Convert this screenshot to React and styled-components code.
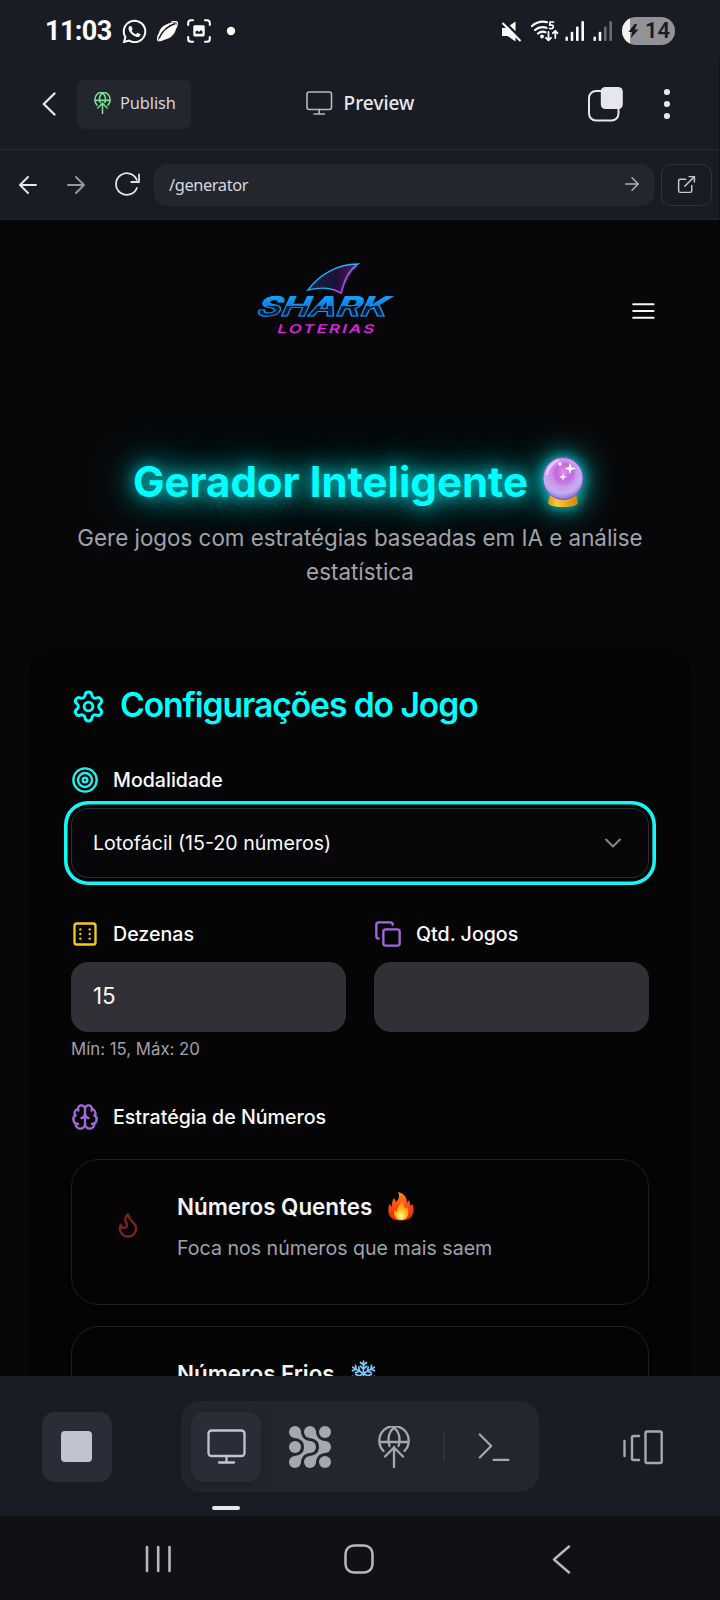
import React from "react";
import styled, { createGlobalStyle } from "styled-components";
import { Settings, Target, Dice6, Copy, Brain, Flame, ChevronDown, ExternalLink } from "lucide-react";
import { FaWhatsapp } from "react-icons/fa";

const Global = createGlobalStyle`
  *, *::before, *::after { box-sizing: border-box; }
  html, body { margin: 0; background: #070709; }
  body { font-family: Inter, "Liberation Sans", sans-serif; color: #f4f4f5; overflow: hidden; }
  h1, h2, h3, p { margin: 0; }
  button { padding: 0; border: 0; background: none; color: inherit; font: inherit; }
  svg { display: block; flex: none; }
`;

const Screen = styled.div`
  width: 720px;
  height: 1600px;
  display: flex;
  flex-direction: column;
  overflow: hidden;
  background: #1a1c24;
`;

/* status bar */
const StatusBar = styled.div`
  height: 60px;
  flex: none;
  display: flex;
  align-items: center;
  padding: 2px 45px 0 45px;
  color: #fff;
`;
const Clock = styled.span`
  width: 76px;
  font: 700 27px/30px Roboto, sans-serif;
  letter-spacing: -0.6px;
`;
const StatusIcons = styled.div`
  display: flex;
  align-items: center;
  gap: ${(p) => p.$gap}px;
  margin-left: ${(p) => p.$push || 0};
`;
const Battery = styled.div`
  width: 53px;
  height: 28px;
  margin-left: 1px;
  border-radius: 14px;
  display: flex;
  align-items: center;
  gap: 6px;
  padding-left: 6px;
  background: linear-gradient(90deg, #f1f1f2 8px, #929398 8px);
  color: #1a1c24;
  font: 600 22px/28px Roboto, sans-serif;
`;

/* application header */
const Header = styled.header`
  height: 90px;
  flex: none;
  display: grid;
  grid-template-columns: 1fr auto 1fr;
  align-items: center;
  padding: 0 49px 1px 42px;
  border-bottom: 1px solid #262831;
  border-right: 1px solid #111217;
  color: #e6e7ec;
  font-family: "Noto Sans", sans-serif;
`;
const HeaderSide = styled.div`
  display: flex;
  align-items: center;
  justify-content: ${(p) => (p.$end ? "flex-end" : "flex-start")};
  gap: ${(p) => (p.$end ? 40 : 21)}px;
`;
const Publish = styled.button`
  width: 114px;
  height: 49px;
  border-radius: 7px;
  display: flex;
  align-items: center;
  gap: 9px;
  padding: 0 0 3px 17px;
  background: #24262f;
  color: #d3d5dc;
  font-size: 16.4px;
  letter-spacing: -0.1px;
`;
const HeaderTitle = styled.div`
  display: flex;
  align-items: center;
  gap: 11px;
  padding: 0 0 2px 8px;
  font-size: 19px;
  font-weight: 500;
  letter-spacing: 0;
`;

/* address row */
const AddressRow = styled.div`
  height: 70px;
  flex: none;
  display: flex;
  align-items: center;
  padding: 0 7px 0 19px;
  border-bottom: 1px solid #24262e;
  border-right: 1px solid #111217;
  color: #e1e3e8;
`;
const NavIcons = styled.div`
  width: 135px;
  display: flex;
  align-items: center;
  gap: 30px;
`;
const Address = styled.div`
  width: 500px;
  height: 42px;
  border-radius: 13px;
  display: flex;
  align-items: center;
  justify-content: space-between;
  padding: 0 15px 1px 15px;
  background: #24262f;
  color: #d6d8de;
  font: 16.4px "Noto Sans", sans-serif;
  letter-spacing: -0.4px;
`;
const OpenButton = styled.button`
  width: 51px;
  height: 42px;
  margin-left: 7px;
  border: 1px solid #30323d;
  border-radius: 10px;
  display: grid;
  place-items: center;
  color: #c5c8d0;
`;

/* previewed page */
const Page = styled.main`
  height: 1156px;
  flex: none;
  overflow: hidden;
  padding: 0 28px;
  background: #070709;
`;
const SiteHeader = styled.div`
  height: 180px;
  display: flex;
  justify-content: space-between;
  align-items: flex-start;
  padding: 38px 37px 0 222px;
`;
const MenuButton = styled.button`
  margin-top: 45px;
`;
const Hero = styled.section`
  height: 248px;
  padding-top: 51px;
  text-align: center;
`;
const HeroTitle = styled.h1`
  display: flex;
  justify-content: center;
  align-items: center;
  gap: 14px;
  height: 62px;
  padding-right: 3px;
  color: #00ffff;
  font-size: 42px;
  font-weight: 700;
  line-height: 62px;
  letter-spacing: 0;
  white-space: nowrap;
  text-shadow: 0 0 14px rgba(0, 255, 255, 0.55), 0 0 28px rgba(0, 255, 255, 0.85), 0 0 56px rgba(0, 255, 255, 0.6);
`;
const BallGlow = styled.span`
  filter: drop-shadow(0 0 7px rgba(0, 255, 255, 0.8)) drop-shadow(0 0 16px rgba(0, 255, 255, 0.6));
`;
const Subtitle = styled.p`
  margin-top: 8px;
  color: #a1a1aa;
  font-size: 22.4px;
  line-height: 34px;
`;
const Panel = styled.section`
  height: 900px;
  border-radius: 28px;
  padding: 37px 43px 0;
  background: #050505;
`;
const PanelTitle = styled.h2`
  height: 42px;
  display: flex;
  align-items: center;
  gap: 14px;
  color: #00ffff;
  font-size: 33.6px;
  font-weight: 600;
  letter-spacing: -1.05px;
  line-height: 40px;
`;
const PanelTitleText = styled.span`
  padding-bottom: 2px;
`;
const Label = styled.div`
  height: 28px;
  display: flex;
  align-items: center;
  gap: 14px;
  color: #fafafa;
  font-size: 19.6px;
  font-weight: 500;
  line-height: 28px;
`;
const ModeField = styled.div`
  margin-top: 39px;
`;
const Select = styled.div`
  height: 70px;
  margin-top: 14px;
  border: 1px solid #2d2d31;
  border-radius: 17px;
  box-shadow: 0 0 0 3.4px #050505, 0 0 0 7px #15f6f6;
  display: flex;
  align-items: center;
  justify-content: space-between;
  padding: 0 21px;
  background: #070709;
  color: #fafafa;
  font-size: 19.6px;
`;
const FieldRow = styled.div`
  display: grid;
  grid-template-columns: 1fr 1fr;
  gap: 28px;
  margin-top: 42px;
`;
const Input = styled.div`
  height: 70px;
  margin-top: 14px;
  border-radius: 17px;
  padding: 0 22px;
  background: #313036;
  color: #fafafa;
  font-size: 22.4px;
  line-height: 68px;
`;
const Hint = styled.p`
  margin: 5px 0 1px;
  color: #a1a1aa;
  font-size: 16.8px;
  line-height: 24px;
`;
const StrategyLabel = styled(Label)`
  margin-top: 41px;
`;
const Strategy = styled.article`
  height: 146px;
  margin-top: ${(p) => (p.$first ? 28 : 21)}px;
  border: 1px solid #202022;
  border-radius: 28px;
  display: flex;
  padding: 27px 41px 28px 42px;
  background: #040404;
  box-shadow: 0 10px 14px rgba(3, 3, 7, 0.6);
`;
const StrategyIcon = styled.div`
  width: 63px;
  padding-top: 24px;
`;
const StrategyTitle = styled.h3`
  display: flex;
  align-items: center;
  gap: 16px;
  height: 38px;
  font-size: 22.4px;
  font-weight: 600;
`;
const StrategyText = styled.p`
  margin-top: 9px;
  color: #a1a1aa;
  font-size: 19.6px;
  line-height: 28px;
`;

/* bottom toolbar */
const Toolbar = styled.footer`
  height: 140px;
  flex: none;
  display: flex;
  align-items: flex-start;
  padding: 25px 57px 0 42px;
  color: #a4a8b2;
`;
const Tile = styled.button`
  width: 70px;
  height: 70px;
  flex: none;
  border-radius: 13px;
  display: grid;
  place-items: center;
  background: #2a2c38;
  color: #c1c4ce;
  box-shadow: ${(p) => (p.$raised ? "0 4px 14px rgba(20,21,29,.4)" : "none")};
`;
const StopTile = styled(Tile)`
  margin: 11px 69px 0 0;
`;
const StopSquare = styled.div`
  width: 31px;
  height: 31px;
  margin: 0 1px 1px 0;
  border-radius: 4px;
  background: #c1c4ce;
`;
const ToolGroup = styled.div`
  width: 358px;
  height: 91px;
  flex: none;
  border-radius: 20px;
  display: flex;
  align-items: center;
  padding-left: 10px;
  background: #24262f;
`;
const TabSlot = styled.div`
  display: flex;
  flex-direction: column;
  align-items: center;
  gap: 24px;
  height: 70px;
`;
const Indicator = styled.div`
  width: 28px;
  height: 4px;
  flex: none;
  border-radius: 2px;
  background: #e6e7ec;
`;
const Tool = styled.button`
  flex: none;
  margin-left: ${(p) => p.$gap}px;
`;
const Divider = styled.div`
  width: 2px;
  height: 28px;
  flex: none;
  margin-left: 33px;
  background: #30323d;
`;
const Devices = styled.button`
  margin: 29px 0 0 auto;
`;

/* system navigation */
const SystemNav = styled.nav`
  height: 84px;
  flex: none;
  display: flex;
  justify-content: space-between;
  align-items: center;
  padding: 4px 149px 2px 145px;
  background: #101115;
  color: #b9b9bb;
`;
const HomeButton = styled.button`
  margin-right: 6px;
`;

const Line = ({ w, h, sw = 2, color = "currentColor", children }) => (
  <svg width={w} height={h} viewBox={`0 0 ${w} ${h}`} fill="none" stroke={color} strokeWidth={sw} strokeLinecap="round" strokeLinejoin="round">
    {children}
  </svg>
);

const GlobeUp = ({ width, height, color = "currentColor", sw = 2.3 }) => (
  <svg width={width} height={height} viewBox="0 0 32 42" fill="none" stroke={color} strokeWidth={sw} strokeLinecap="round" strokeLinejoin="round">
    <path d="M5.5 25A14.7 14.7 0 1 1 26.5 25M1.5 16H30.5M11.5 20C9 12 11.5 5 16 1.5C20.5 5 23 12 20.5 20M16 41V21M7 30.5L16 21.5L25 30.5" />
  </svg>
);

const Signal = ({ weak }) => (
  <svg width="20" height="20" viewBox="0 0 20 20" fill="#fff">
    <rect x="0.5" y="15.5" width="2.4" height="4.5" rx="1" />
    <rect x="5.7" y="10.8" width="2.6" height="9.2" rx="1" />
    <rect x="11" y="5.5" width="2.6" height="14.5" rx="1" opacity={weak ? 0.35 : 1} />
    <rect x="16.4" y="0" width="2.6" height="20" rx="1" opacity={weak ? 0.35 : 1} />
  </svg>
);

const Arrow = ({ left, size = 18, color, sw = 1.9 }) => (
  <svg width={size} height={size} viewBox="0 0 18 18" fill="none" stroke={color} strokeWidth={sw} strokeLinecap="round" strokeLinejoin="round">
    <path d={left ? "M17 9H1M9 1L1 9L9 17" : "M1 9H17M9 1L17 9L9 17"} />
  </svg>
);

const Flow = () => (
  <svg width="42" height="42" viewBox="0 0 42 42" fill="currentColor">
    {[6, 21, 36].map((x) => [6, 21, 36].map((y) => <circle key={`${x}-${y}`} cx={x} cy={y} r="6" />))}
    <path d="M11.8 4.5C12 10.5 15.5 14.8 21 15V27C15.5 27.2 12 31.5 11.8 37.5L5 30C11 29.6 15 27 15 21S11 12.4 5 12Z" />
    <path d="M26.8 4.5C27 10.5 30.5 14.8 36 15V27C30.5 27.2 27 31.5 26.8 37.5L20 30C26 29.6 30 27 30 21S26 12.4 20 12Z" />
  </svg>
);

const Logo = () => (
  <svg width="144" height="80" viewBox="0 0 144 80" overflow="visible">
    <defs>
      <linearGradient id="edge" x1="0" y1="0" x2="1" y2="0.3">
        <stop offset="0" stopColor="#159de9" /><stop offset="0.6" stopColor="#22b8ee" /><stop offset="1" stopColor="#22b8ee" />
      </linearGradient>
      <linearGradient id="finFill" x1="0" y1="0" x2="1" y2="0">
        <stop offset="0" stopColor="#06253c" /><stop offset="0.55" stopColor="#170d30" /><stop offset="1" stopColor="#641064" />
      </linearGradient>
      <linearGradient id="word" gradientUnits="userSpaceOnUse" x1="0" y1="-20" x2="0" y2="0">
        <stop offset="0" stopColor="#16a9ff" /><stop offset="0.48" stopColor="#0878ee" /><stop offset="0.5" stopColor="#05152e" /><stop offset="1" stopColor="#071f42" />
      </linearGradient>
      <pattern id="mesh" width="3" height="3" patternUnits="userSpaceOnUse" patternTransform="rotate(25)">
        <circle cx="1" cy="1" r="0.55" fill="#52358d" />
      </pattern>
    </defs>
    <path d="M58 32C69 17 87 6 108 6C98 12 94 24 91 35C81 29 70 29 58 32Z" fill="url(#finFill)" />
    <path d="M58 32C69 17 87 6 108 6C98 12 94 24 91 35C81 29 70 29 58 32Z" fill="url(#mesh)" stroke="url(#edge)" strokeWidth="1.4" />
    <path d="M107 7.5C98 14 94 24 91 35L83 31.5" fill="none" stroke="#c42ad8" strokeWidth="1.5" />
    <text x="0" y="0" transform="translate(5 58) skewX(-24)" textLength="130" lengthAdjust="spacingAndGlyphs" fontFamily="Inter, sans-serif" fontWeight="700" fontSize="27" fill="url(#word)" stroke="#149bf2" strokeWidth="0.9">SHARK</text>
    <text x="0" y="0" transform="translate(26.5 75) skewX(-16)" textLength="99" lengthAdjust="spacingAndGlyphs" fontFamily="Inter, sans-serif" fontWeight="600" fontSize="12" letterSpacing="1.5" fill="#dc24dc">LOTERIAS</text>
  </svg>
);

const CrystalBall = () => (
  <svg width="42" height="52" viewBox="0 0 42 52">
    <defs>
      <radialGradient id="ball" cx="0.48" cy="0.36" r="0.66">
        <stop offset="0" stopColor="#e08bee" /><stop offset="0.35" stopColor="#cf86ea" /><stop offset="0.75" stopColor="#c3b0ef" /><stop offset="1" stopColor="#8264cf" />
      </radialGradient>
      <linearGradient id="brass" x1="0" y1="0" x2="1" y2="0">
        <stop offset="0" stopColor="#d99a10" /><stop offset="0.3" stopColor="#f8cb3c" /><stop offset="1" stopColor="#cf8508" />
      </linearGradient>
      <radialGradient id="core" cx="0.5" cy="0.4" r="0.5">
        <stop offset="0" stopColor="#ea8df2" /><stop offset="0.7" stopColor="#bb62da" stopOpacity="0.8" /><stop offset="1" stopColor="#b061d8" stopOpacity="0.3" />
      </radialGradient>
    </defs>
    <path d="M8 39L6 46Q6 51 21 51Q36 51 36 46L34 39Z" fill="url(#brass)" />
    <ellipse cx="21" cy="22.5" rx="20" ry="21" fill="url(#ball)" stroke="#8150c9" strokeWidth="1" />
    <circle cx="22" cy="18" r="11.5" fill="url(#core)" />
    <path d="M5 18Q7 8 16 4" fill="none" stroke="#f4d4fb" strokeWidth="2.5" strokeLinecap="round" opacity="0.8" />
    <path d="M28 7L29.4 11L34 12.5L29.4 14L28 18L26.6 14L22.5 12.5L26.6 11ZM18 5L18.9 7.3L21 8L18.9 8.8L18 11L17.1 8.8L15 8L17.1 7.3ZM21 17L22 20L25 21L22 22L21 25L20 22L17 21L20 20Z" fill="#fff" />
  </svg>
);

const Fire = () => (
  <svg width="26" height="29" viewBox="0 0 26 29">
    <defs>
      <linearGradient id="flame" x1="0" y1="0" x2="0" y2="1">
        <stop offset="0" stopColor="#ff8a1c" /><stop offset="0.5" stopColor="#fb4a12" /><stop offset="1" stopColor="#e82412" />
      </linearGradient>
      <radialGradient id="heart" cx="0.5" cy="0.8" r="0.6">
        <stop offset="0" stopColor="#fff8b0" /><stop offset="0.5" stopColor="#ffc81e" /><stop offset="1" stopColor="#ff8c12" />
      </radialGradient>
    </defs>
    <path d="M10 0C17 2 19 6 19 11L21 8C22 11 22 12 22.5 14L24.5 12C26 17 26 22 22.5 25.5Q19 29 13 28.5Q6 29 3 25.5C-0.5 22 0 16 1.5 12L4 15C4 11 4 9 6 6L8 10C11 7 12 4 10 0Z" fill="url(#flame)" />
    <path d="M13.5 8C16 11 16 14 17 17L19 15C22 21 20 28 13 28Q5 27.5 6 18L8.5 20C9 15 13 13 13.5 8Z" fill="url(#heart)" />
  </svg>
);

const Snowflake = () => (
  <svg width="25" height="27" viewBox="0 0 25 27" fill="none" stroke="#7cc8fb" strokeWidth="1.7" strokeLinecap="round">
    {[0, 60, 120, 180, 240, 300].map((a) => (
      <path key={a} transform={`rotate(${a} 12.5 13.5)`} d="M12.5 13.5V1M12.5 5L9.5 2.5M12.5 5L15.5 2.5M12.5 9L9.3 6.2M12.5 9L15.7 6.2" />
    ))}
  </svg>
);

export default function App() {
  return (
    <Screen>
      <Global />
      <StatusBar>
        <Clock>11:03</Clock>
        <StatusIcons $gap={9}>
          <FaWhatsapp size={27} />
          <svg width="21" height="21" viewBox="0 0 21 21">
            <path d="M2 19C-0.5 10.5 5 1.5 19 1.5C21 10 15 20 2 19Z" fill="#fff" />
            <path d="M2 17.5C5 10.5 10 5 18.5 2.5" stroke="#1a1c24" strokeWidth="1.5" fill="none" />
            <path d="M1.8 13C0.5 16 0.3 18 1 19.5C3 20.5 6 19 8 17.5M14 1.5C17 0.2 19 0.2 20 1C20.6 2.5 20 5 19 7" stroke="#fff" strokeWidth="1.3" fill="none" />
          </svg>
          <Line w={24} h={24} sw={2.1}>
            <path d="M1.2 6V4Q1.2 1.2 4 1.2H6M18 1.2H20Q22.8 1.2 22.8 4V6M22.8 18V20Q22.8 22.8 20 22.8H18M6 22.8H4Q1.2 22.8 1.2 20V18" />
            <rect x="6.3" y="6.3" width="11.4" height="11.2" rx="1.4" fill="#fff" stroke="none" />
            <path d="M8.5 14.8V12.5L10.5 11.5L12 13L14 11L15.5 12.5V14.8Z" fill="#1a1c24" stroke="none" />
          </Line>
          <svg width="28" height="10" viewBox="0 0 28 10"><circle cx="11" cy="5" r="4.2" fill="#fff" /></svg>
        </StatusIcons>
        <StatusIcons $gap={8} $push="auto">
          <svg width="21" height="21" viewBox="-1 0 21 21" overflow="visible">
            <path d="M1 7H5.2L14.5 0.5V20.5L6.5 15H1Z" fill="#fff" />
            <path d="M2.5 0L21 18.5" stroke="#1a1c24" strokeWidth="2.6" />
            <path d="M1.5 2L19.5 20" stroke="#fff" strokeWidth="2" />
          </svg>
          <svg width="28" height="22" viewBox="-1.5 0 28 22" overflow="visible" fill="none" stroke="#fff" strokeWidth="2.2" strokeLinecap="round" strokeLinejoin="round">
            <path d="M1.5 6Q8.5 0 16.5 2.2M4.5 10Q9.5 5.5 16 7.8M7.5 13.5Q11 10.5 15 12.2" />
            <circle cx="11.5" cy="16.5" r="0.8" fill="#fff" />
            <path d="M23 2H19.5L19.2 5.2Q23 4.5 22.8 7Q22.4 9.2 19 8.5" strokeWidth="1.7" />
            <path d="M18 12V20M15.5 17.8L18 20.3L20.5 17.8M24.8 18V11M22.3 13.2L24.8 10.8L27 13.2" strokeWidth="1.8" />
          </svg>
          <Signal />
          <Signal weak />
          <Battery>
            <svg width="11" height="14" viewBox="0 0 11 14"><path d="M6.5 0L0.5 8H4L3 14L10.5 5.5H6.8L9 0Z" fill="#1a1c24" /></svg>
            14
          </Battery>
        </StatusIcons>
      </StatusBar>

      <Header>
        <HeaderSide>
          <Line w={14} h={24} sw={2.4}><path d="M12.5 1.5L1.8 12L12.5 22.5" /></Line>
          <Publish><GlobeUp width={17} height={22} color="#7fe093" sw={2.9} />Publish</Publish>
        </HeaderSide>
        <HeaderTitle>
          <Line w={27} h={24} sw={1.6} color="#b5b8c2">
            <rect x="1" y="1" width="24.5" height="17.5" rx="2.2" /><path d="M13.2 18.5V23M8 23H18.5" />
          </Line>
          Preview
        </HeaderTitle>
        <HeaderSide $end>
          <Line w={35} h={36} sw={2}>
            <rect x="1" y="5" width="29.5" height="29.5" rx="7" /><rect x="12.8" y="1" width="22" height="22" rx="4.5" fill="#e6e7ec" stroke="none" />
          </Line>
          <svg width="7" height="32" viewBox="0 0 7 32" fill="#e6e7ec"><circle cx="4" cy="4" r="3.1" /><circle cx="4" cy="16" r="3.1" /><circle cx="4" cy="28" r="3.1" /></svg>
        </HeaderSide>
      </Header>

      <AddressRow>
        <NavIcons>
          <Arrow left color="#e6e7ec" />
          <Arrow color="#9699a4" />
          <Line w={27} h={26} sw={1.8}><path d="M24 2.5V10H16.3M21.8 7.8A10.8 10.8 0 1 0 21.9 16" /></Line>
        </NavIcons>
        <Address>/generator<Arrow size={14} color="#aeb1bb" /></Address>
        <OpenButton><ExternalLink size={21} strokeWidth={1.7} /></OpenButton>
      </AddressRow>

      <Page>
        <SiteHeader>
          <Logo />
          <MenuButton><Line w={23} h={16} sw={2.1}><path d="M1.2 1.2H21.5M1.2 8H21.5M1.2 14.8H21.5" /></Line></MenuButton>
        </SiteHeader>
        <Hero>
          <HeroTitle>Gerador Inteligente<BallGlow role="img" aria-label="🔮"><CrystalBall /></BallGlow></HeroTitle>
          <Subtitle>Gere jogos com estratégias baseadas em IA e análise estatística</Subtitle>
        </Hero>
        <Panel>
          <PanelTitle><Settings size={35} strokeWidth={2} /><PanelTitleText>Configurações do Jogo</PanelTitleText></PanelTitle>
          <ModeField>
            <Label><Target size={28} color="#22f0f0" />Modalidade</Label>
            <Select>Lotofácil (15-20 números)<ChevronDown size={28} strokeWidth={1.8} color="#858588" /></Select>
          </ModeField>
          <FieldRow>
            <div>
              <Label><Dice6 size={28} color="#f2ce18" />Dezenas</Label>
              <Input>15</Input>
              <Hint>Mín: 15, Máx: 20</Hint>
            </div>
            <div>
              <Label><Copy size={28} color="#a368dc" />Qtd. Jogos</Label>
              <Input />
            </div>
          </FieldRow>
          <StrategyLabel><Brain size={28} color="#a368dc" />Estratégia de Números</StrategyLabel>
          <Strategy $first>
            <StrategyIcon><Flame size={28} color="#7c2424" /></StrategyIcon>
            <div>
              <StrategyTitle>Números Quentes<Fire /></StrategyTitle>
              <StrategyText>Foca nos números que mais saem</StrategyText>
            </div>
          </Strategy>
          <Strategy>
            <StrategyIcon />
            <div><StrategyTitle>Números Frios<Snowflake /></StrategyTitle></div>
          </Strategy>
        </Panel>
      </Page>

      <Toolbar>
        <StopTile><StopSquare /></StopTile>
        <ToolGroup>
          <TabSlot>
            <Tile $raised>
              <Line w={39} h={35} sw={2.3}><rect x="1.5" y="1.5" width="36" height="25.5" rx="3" /><path d="M19.5 27V33.5M12 33.5H27" /></Line>
            </Tile>
            <Indicator />
          </TabSlot>
          <Tool $gap={28}><Flow /></Tool>
          <Tool $gap={47}><GlobeUp width={32} height={42} /></Tool>
          <Divider />
          <Tool $gap={33}><Line w={32} h={29} sw={2.2}><path d="M1.8 2.5L13.2 14L1.8 25.5M15.5 27.8H30.5" /></Line></Tool>
        </ToolGroup>
        <Devices>
          <Line w={40} h={35} sw={2.4}><path d="M1.5 11V26M16 6H10.5Q9 6 9 7.5V28.5Q9 30 10.5 30H16" /><rect x="22.5" y="1.5" width="16.2" height="31.5" rx="1.5" /></Line>
        </Devices>
      </Toolbar>

      <SystemNav>
        <Line w={27} h={28} sw={2.6}><path d="M2 2V26M13.2 2V26M24.5 2V26" /></Line>
        <HomeButton><Line w={30} h={30} sw={2.5}><rect x="1.5" y="1.5" width="27" height="27" rx="8.5" /></Line></HomeButton>
        <Line w={19} h={29} sw={2.4}><path d="M17 1.5L2 14.5L17 27.5" /></Line>
      </SystemNav>
    </Screen>
  );
}
